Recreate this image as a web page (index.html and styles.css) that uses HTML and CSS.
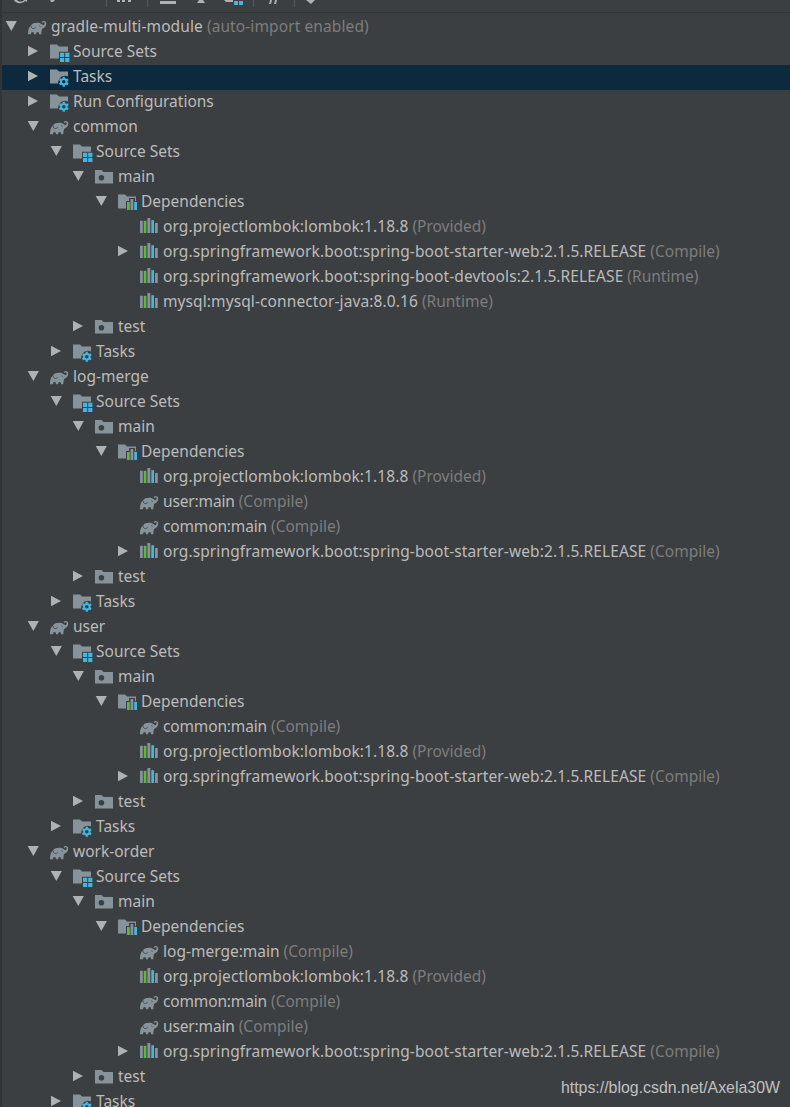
FILE: index.html
```html
<!DOCTYPE html>
<html lang="en">
<head>
    <meta charset="UTF-8">
    <title>Gradle</title>
    <link rel="stylesheet" href="styles.css">
</head>
<body>
    <svg class="sprite" xmlns="http://www.w3.org/2000/svg">
        <symbol id="open" viewBox="0 0 12 12"><path d="M.7 1h11.200L6.300 11z"/></symbol>
        <symbol id="closed" viewBox="0 0 12 12"><path d="M1 .8v10.400L11 6z"/></symbol>
        <symbol id="gradle" viewBox="0 0 20 20">
            <path fill="#87939a" d="M0 17.200c-.1-4 .8-7 3-8.700.8-1.800 2.600-2.800 4.600-2.500 2.200-.8 4.800-.3 6.400 1.600.8.700 1.700.6 2.300-.2.600-.9.300-2-.5-2.100-.6-.1-.9.200-1.400.6l-.8-1c1.300-1.300 3.300-1.300 4.200.1 1 1.700.2 4.200-1.400 5.500-1.100.9-2.200 1.200-2.600 2.300-.3 1.300-.4 2.900-.5 4.400h-2.200c-.1-1.400-.5-2.200-1.500-2.200s-1.400.8-1.500 2.200H6c-.1-1.400-.5-2.200-1.500-2.200s-1.400.8-1.500 2.200z"/>
            <path d="M3.300 8.700c-.3 3 2.400 3.700 4.400 1.700M11.300 8.800l1.300.7" fill="none" stroke="#3c3f41" stroke-width=".8"/>
        </symbol>
        <symbol id="sets" viewBox="0 0 20 20">
            <path fill="#87939a" d="M0 2.500h7l2 2h9v5.200H9v6.800H0z"/>
            <path fill="#40b6e0" d="M10 10.700h4.200v4.200H10zM15.200 10.700h4.200v4.200h-4.200zM10 15.900h4.200V20H10zM15.200 15.900h4.200V20h-4.200z"/>
        </symbol>
        <symbol id="tasks" viewBox="0 0 20 20">
            <path fill="#87939a" d="M0 2.500h7l2 2h9v4.900c-5-2.500-10 1.500-9.800 7.100H0z"/>
            <g stroke="#40b6e0" fill="none">
                <circle cx="13.800" cy="14.700" r="2.800" stroke-width="2"/>
                <path stroke-width="2.200" d="M13.800 9.700v2M13.800 17.700v2M9.500 12.200l1.700 1M16.400 16.200l1.700 1M18.100 12.200l-1.700 1M11.200 16.200l-1.700 1"/>
            </g>
        </symbol>
        <symbol id="module" viewBox="0 0 20 20">
            <path fill="#87939a" fill-rule="evenodd" d="M0 3h6.500l2 2H18v11.400H0zM6.400 7.900a2.800 2.800 0 1 0 0 5.600 2.800 2.800 0 0 0 0-5.600z"/>
        </symbol>
        <symbol id="deps" viewBox="0 0 20 20">
            <path fill="#87939a" d="M0 2.500h7l2 2h9v4.700h-1V6h-6v3H8v7.500H0z"/>
            <path fill="#62b543" d="M9 10h2.800v8H9z"/>
            <path fill="#87939a" d="M12.500 7h2.800v11h-2.800z"/>
            <path fill="#40b6e0" d="M16.200 10H19v8h-2.800z"/>
        </symbol>
        <symbol id="lib" viewBox="0 0 20 20">
            <path fill="#87939a" d="M0 3.800h2.800V16H0zM7.400 1.100h2.900V16H7.400zM15 6h2.800v10H15z"/>
            <path fill="#62b543" d="M3.700 3.800h2.700V16H3.700z"/>
            <path fill="#40b6e0" d="M11.300 3.200H14V16h-2.700z"/>
        </symbol>
    </svg>

    <div class="panel">
        <div class="toolbar">
            <svg width="340" height="12" viewBox="0 0 340 12">
                <g fill="#afb1b3">
                    <path d="M14 0c2 4 8 4 11 1l2 1V0h-3c-2 2-5 2-7 0z"/>
                    <path d="M50 0h5l-2 2h-2z"/>
                    <path d="M117 0h3v2h-3zM122 0h3v2h-3zM128 0h3v2h-3z"/>
                    <path d="M160 1h16v3h-16z"/>
                    <path d="M199 0h4l2 3h-8z"/>
                    <path d="M224 0h9v2h-7z"/>
                    <path d="M270 0h2l-1 4h-2zM275 0h2l-1 4h-2z"/>
                    <path d="M306 0h9l-4 4z"/>
                </g>
                <path fill="#40b6e0" d="M234 1h4v4h-4zM239 1h4v4h-4z"/>
                <path fill="#55595b" d="M106 0h1v7h-1zM147 0h1v7h-1zM253 0h1v7h-1zM294 0h1v7h-1z"/>
            </svg>
        </div>

        <div class="tree">
            <div class="row l0"><svg class="arrow"><use href="#open"/></svg><svg class="icon"><use href="#gradle"/></svg><span>gradle-multi-module</span><em>(auto-import enabled)</em></div>
            <div class="row l1"><svg class="arrow"><use href="#closed"/></svg><svg class="icon"><use href="#sets"/></svg><span>Source Sets</span></div>
            <div class="row l1 selected"><svg class="arrow"><use href="#closed"/></svg><svg class="icon"><use href="#tasks"/></svg><span>Tasks</span></div>
            <div class="row l1"><svg class="arrow"><use href="#closed"/></svg><svg class="icon"><use href="#tasks"/></svg><span>Run Configurations</span></div>

            <!-- common -->
            <div class="row l1"><svg class="arrow"><use href="#open"/></svg><svg class="icon"><use href="#gradle"/></svg><span>common</span></div>
            <div class="row l2"><svg class="arrow"><use href="#open"/></svg><svg class="icon"><use href="#sets"/></svg><span>Source Sets</span></div>
            <div class="row l3"><svg class="arrow"><use href="#open"/></svg><svg class="icon"><use href="#module"/></svg><span>main</span></div>
            <div class="row l4"><svg class="arrow"><use href="#open"/></svg><svg class="icon"><use href="#deps"/></svg><span>Dependencies</span></div>
            <div class="row l5"><svg class="arrow"></svg><svg class="icon"><use href="#lib"/></svg><span class="artifact">org.projectlombok:lombok:1.18.8</span><em>(Provided)</em></div>
            <div class="row l5"><svg class="arrow"><use href="#closed"/></svg><svg class="icon"><use href="#lib"/></svg><span class="artifact">org.springframework.boot:spring-boot-starter-web:2.1.5.RELEASE</span><em>(Compile)</em></div>
            <div class="row l5"><svg class="arrow"></svg><svg class="icon"><use href="#lib"/></svg><span class="artifact">org.springframework.boot:spring-boot-devtools:2.1.5.RELEASE</span><em>(Runtime)</em></div>
            <div class="row l5"><svg class="arrow"></svg><svg class="icon"><use href="#lib"/></svg><span class="artifact">mysql:mysql-connector-java:8.0.16</span><em>(Runtime)</em></div>
            <div class="row l3"><svg class="arrow"><use href="#closed"/></svg><svg class="icon"><use href="#module"/></svg><span>test</span></div>
            <div class="row l2"><svg class="arrow"><use href="#closed"/></svg><svg class="icon"><use href="#tasks"/></svg><span>Tasks</span></div>

            <!-- log-merge -->
            <div class="row l1"><svg class="arrow"><use href="#open"/></svg><svg class="icon"><use href="#gradle"/></svg><span>log-merge</span></div>
            <div class="row l2"><svg class="arrow"><use href="#open"/></svg><svg class="icon"><use href="#sets"/></svg><span>Source Sets</span></div>
            <div class="row l3"><svg class="arrow"><use href="#open"/></svg><svg class="icon"><use href="#module"/></svg><span>main</span></div>
            <div class="row l4"><svg class="arrow"><use href="#open"/></svg><svg class="icon"><use href="#deps"/></svg><span>Dependencies</span></div>
            <div class="row l5"><svg class="arrow"></svg><svg class="icon"><use href="#lib"/></svg><span class="artifact">org.projectlombok:lombok:1.18.8</span><em>(Provided)</em></div>
            <div class="row l5"><svg class="arrow"></svg><svg class="icon"><use href="#gradle"/></svg><span class="project">user:main</span><em>(Compile)</em></div>
            <div class="row l5"><svg class="arrow"></svg><svg class="icon"><use href="#gradle"/></svg><span class="project">common:main</span><em>(Compile)</em></div>
            <div class="row l5"><svg class="arrow"><use href="#closed"/></svg><svg class="icon"><use href="#lib"/></svg><span class="artifact">org.springframework.boot:spring-boot-starter-web:2.1.5.RELEASE</span><em>(Compile)</em></div>
            <div class="row l3"><svg class="arrow"><use href="#closed"/></svg><svg class="icon"><use href="#module"/></svg><span>test</span></div>
            <div class="row l2"><svg class="arrow"><use href="#closed"/></svg><svg class="icon"><use href="#tasks"/></svg><span>Tasks</span></div>

            <!-- user -->
            <div class="row l1"><svg class="arrow"><use href="#open"/></svg><svg class="icon"><use href="#gradle"/></svg><span>user</span></div>
            <div class="row l2"><svg class="arrow"><use href="#open"/></svg><svg class="icon"><use href="#sets"/></svg><span>Source Sets</span></div>
            <div class="row l3"><svg class="arrow"><use href="#open"/></svg><svg class="icon"><use href="#module"/></svg><span>main</span></div>
            <div class="row l4"><svg class="arrow"><use href="#open"/></svg><svg class="icon"><use href="#deps"/></svg><span>Dependencies</span></div>
            <div class="row l5"><svg class="arrow"></svg><svg class="icon"><use href="#gradle"/></svg><span class="project">common:main</span><em>(Compile)</em></div>
            <div class="row l5"><svg class="arrow"></svg><svg class="icon"><use href="#lib"/></svg><span class="artifact">org.projectlombok:lombok:1.18.8</span><em>(Provided)</em></div>
            <div class="row l5"><svg class="arrow"><use href="#closed"/></svg><svg class="icon"><use href="#lib"/></svg><span class="artifact">org.springframework.boot:spring-boot-starter-web:2.1.5.RELEASE</span><em>(Compile)</em></div>
            <div class="row l3"><svg class="arrow"><use href="#closed"/></svg><svg class="icon"><use href="#module"/></svg><span>test</span></div>
            <div class="row l2"><svg class="arrow"><use href="#closed"/></svg><svg class="icon"><use href="#tasks"/></svg><span>Tasks</span></div>

            <!-- work-order -->
            <div class="row l1"><svg class="arrow"><use href="#open"/></svg><svg class="icon"><use href="#gradle"/></svg><span>work-order</span></div>
            <div class="row l2"><svg class="arrow"><use href="#open"/></svg><svg class="icon"><use href="#sets"/></svg><span>Source Sets</span></div>
            <div class="row l3"><svg class="arrow"><use href="#open"/></svg><svg class="icon"><use href="#module"/></svg><span>main</span></div>
            <div class="row l4"><svg class="arrow"><use href="#open"/></svg><svg class="icon"><use href="#deps"/></svg><span>Dependencies</span></div>
            <div class="row l5"><svg class="arrow"></svg><svg class="icon"><use href="#gradle"/></svg><span>log-merge:main</span><em>(Compile)</em></div>
            <div class="row l5"><svg class="arrow"></svg><svg class="icon"><use href="#lib"/></svg><span class="artifact">org.projectlombok:lombok:1.18.8</span><em>(Provided)</em></div>
            <div class="row l5"><svg class="arrow"></svg><svg class="icon"><use href="#gradle"/></svg><span class="project">common:main</span><em>(Compile)</em></div>
            <div class="row l5"><svg class="arrow"></svg><svg class="icon"><use href="#gradle"/></svg><span class="project">user:main</span><em>(Compile)</em></div>
            <div class="row l5"><svg class="arrow"><use href="#closed"/></svg><svg class="icon"><use href="#lib"/></svg><span class="artifact">org.springframework.boot:spring-boot-starter-web:2.1.5.RELEASE</span><em>(Compile)</em></div>
            <div class="row l3"><svg class="arrow"><use href="#closed"/></svg><svg class="icon"><use href="#module"/></svg><span>test</span></div>
            <div class="row l2"><svg class="arrow"><use href="#closed"/></svg><svg class="icon"><use href="#tasks"/></svg><span>Tasks</span></div>
        </div>
        <div class="watermark">https://blog.csdn.net/Axela30W</div>
    </div>
</body>
</html>
```
FILE: styles.css
```css
:root {
    --bg: #3c3f41;
    --border: #323435;
    --selected: #0d293e;
    --text: #bbbbbb;
    --muted: #7d7d7d;
    --arrow: #afb1b3;
}

body {
    margin: 0;
    background-color: var(--bg);
    color: var(--text);
    font-family: 'Noto Sans', 'Open Sans', sans-serif;
    font-size: 15.5px;
    overflow: hidden;
}

.sprite {
    display: none;
}

.panel {
    box-sizing: border-box;
    position: relative;
    height: 1107px;
    border-left: 2px solid var(--border);
    overflow: hidden;
}

.toolbar {
    height: 12px;
    border-bottom: 1px solid var(--border);
}

.toolbar svg {
    display: block;
    margin-left: -2px;
}

.tree {
    padding-top: 2px;
}

.row {
    display: flex;
    align-items: flex-start;
    height: 25px;
    line-height: 23px;
    white-space: nowrap;
}

.row.selected {
    background-color: var(--selected);
}

.l0 { padding-left: 3px; letter-spacing: 0.1px; }
.l1 { padding-left: 25px; }
.l2 { padding-left: 48px; }
.l3 { padding-left: 70px; }
.l4 { padding-left: 93px; }
.l5 { padding-left: 115px; }

.artifact {
    letter-spacing: 0.1px;
}

.project {
    letter-spacing: -0.15px;
}

.arrow {
    flex: none;
    width: 12px;
    height: 12px;
    margin: 5px 11px 0 0;
    fill: var(--arrow);
}

.icon {
    flex: none;
    width: 20px;
    height: 20px;
    margin: 2px 3px 0 0;
}

.row em {
    margin-left: 4px;
    color: var(--muted);
    font-style: normal;
}

.watermark {
    position: absolute;
    right: 10px;
    bottom: 9px;
    color: #c0c1c2;
    font-family: 'Liberation Sans', Arial, sans-serif;
    font-size: 15.9px;
    line-height: 20px;
}
```
